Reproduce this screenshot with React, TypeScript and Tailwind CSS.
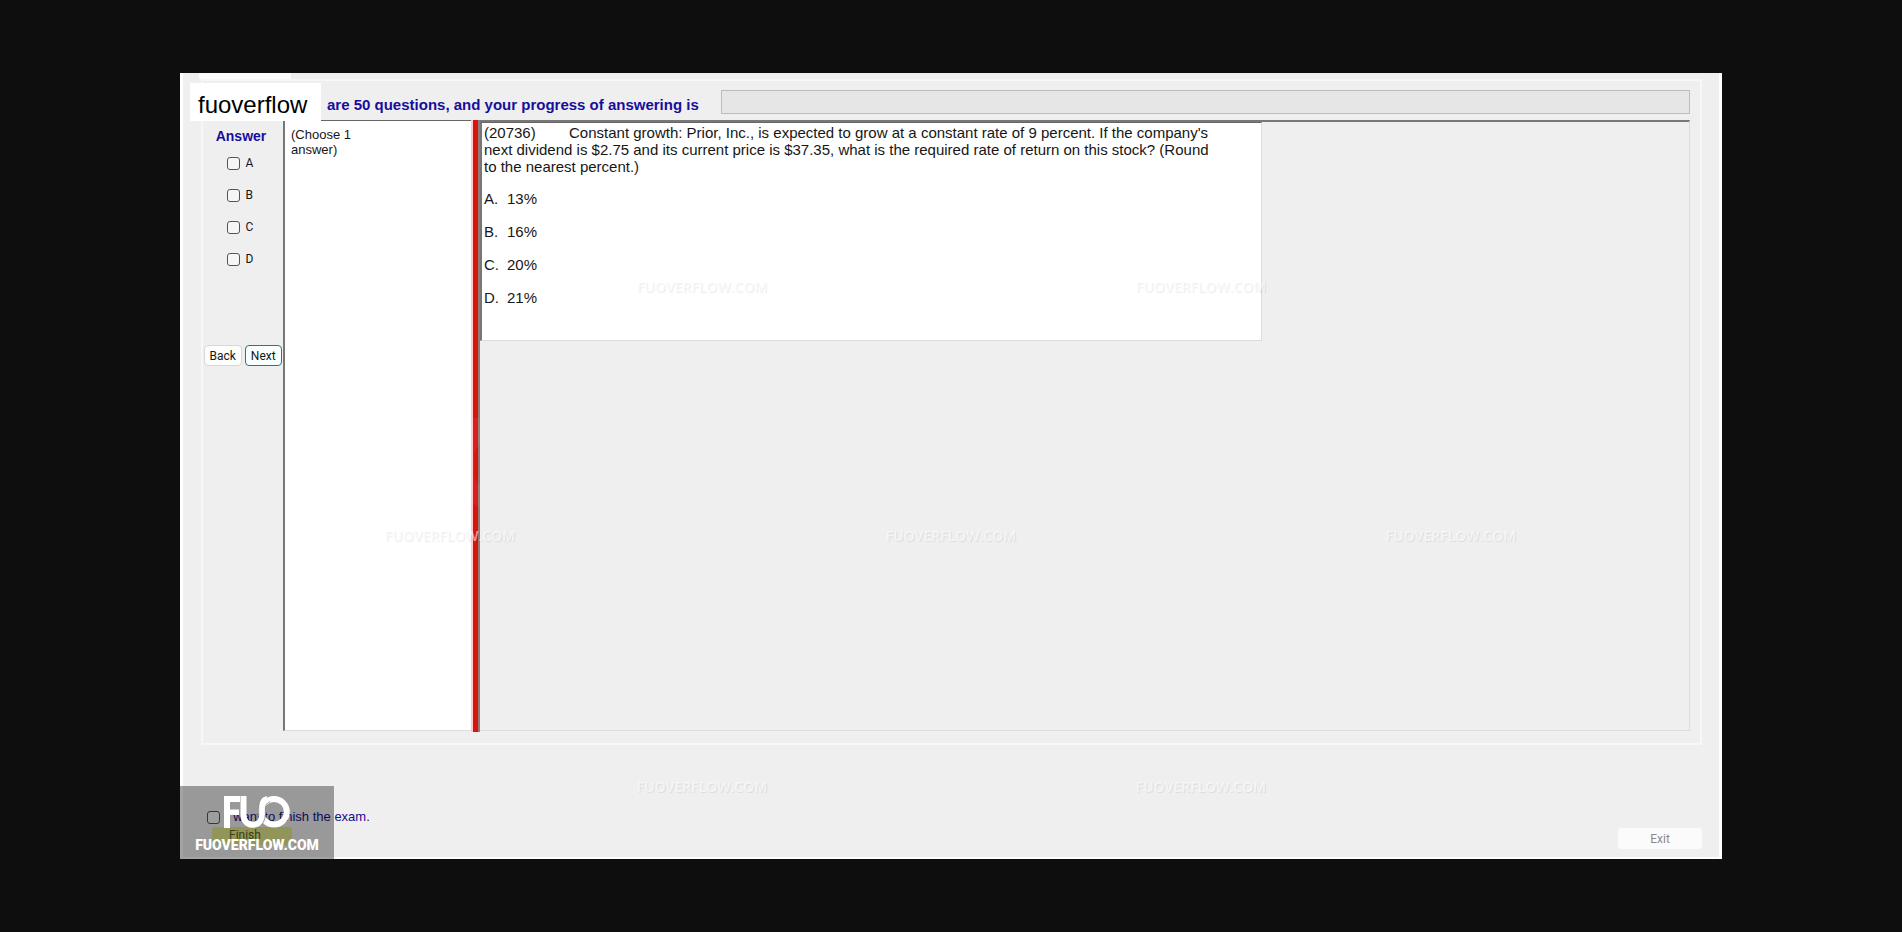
import React from "react";

const choices = ["A", "B", "C", "D"];

const answers = [
  { key: "A", text: "13%" },
  { key: "B", text: "16%" },
  { key: "C", text: "20%" },
  { key: "D", text: "21%" },
];

const watermarks = [
  { x: 519, y: 91 },
  { x: 1018, y: 91 },
  { x: 267, y: 340 },
  { x: 768, y: 340 },
  { x: 1268, y: 340 },
  { x: 519, y: 591 },
  { x: 1018, y: 591 },
];

function FuoLogo({ className, seam = false }: { className: string; seam?: boolean }) {
  return (
    <svg viewBox="0 0 66 32" className={className} fill="none" aria-hidden="true">
      <path d="M0 0H16V6H6V13.500H15V19H6V32H0Z" fill="currentColor" />
      <circle cx="50" cy="15.800" r="12.800" stroke="currentColor" strokeWidth="6" />
      <path
        d="M19.500 0V18.500C19.500 25 23.500 28.800 29 28.800S38 25 38 18.500V11C38 6.500 39.500 3.500 43 3"
        stroke="currentColor"
        strokeWidth="6"
      />
      {seam && (
        <g stroke="#8f8f8f" strokeWidth="0.900">
          <path d="M34.700 20V11C34.700 5.500 37 1.500 41 0" />
          <path d="M41.400 19V13C41.400 9 43 6.500 46 5.800" />
          <path d="M41.300 19C41 23.500 39.500 27 36.500 29.500" />
        </g>
      )}
    </svg>
  );
}

function Watermark({ x, y }: { x: number; y: number }) {
  return (
    <div className="absolute flex w-50 -translate-x-1/2 flex-col items-center" style={{ left: x, top: y }}>
      <FuoLogo className="h-[105px] w-50 text-white opacity-5" />
      <span className="mt-2 font-['Open_Sans',sans-serif] text-[14px] leading-5 font-semibold text-white/60 [text-shadow:1px_1px_1px_rgb(0_0_0/0.08)]">
        FUOVERFLOW.COM
      </span>
    </div>
  );
}

const box =
  "size-[13px] shrink-0 appearance-none rounded-[3px] border border-[#555] bg-[#f6f6f6] checked:bg-[#0a6a8a]";

export default function App() {
  return (
    <div className="flex min-h-screen flex-col bg-[#0e0e0e] px-[180px] py-[73px] font-['Liberation_Sans',Arial,sans-serif] text-[#161616]">
      <main className="relative flex flex-1 flex-col border-x-[3px] border-b-2 border-white bg-[#efefef]">
        <div className="absolute top-0 left-4 h-[6px] w-[92px] bg-[#fcfcfc]" />

        <section className="mt-[6px] mr-[17px] ml-[18px] flex flex-1 flex-col border-2 border-[#f7f7f7] pr-[10px] pb-3">
          <header className="flex h-[39px] items-start pl-[124px]">
            <h1 className="mt-[14px] shrink-0 text-[15px] leading-5 font-bold whitespace-nowrap text-[#180d9c]">
              are 50 questions, and your progress of answering is
            </h1>
            <div
              role="progressbar"
              aria-label="Answering progress"
              aria-valuenow={0}
              className="mt-[9px] ml-[22px] h-6 flex-1 border border-[#bcbcbc] bg-[#e6e6e6]"
            />
          </header>

          <div className="flex flex-1">
            <fieldset className="flex w-20 shrink-0 flex-col items-center">
              <legend className="w-full pt-[6px] pr-1 text-center text-[14px] leading-5 font-bold text-[#180d9c]">
                Answer
              </legend>
              <div className="flex flex-col pt-px pr-[2px]">
                {choices.map((c) => (
                  <label key={c} className="flex h-8 items-center gap-[6px] font-['Roboto',sans-serif] text-[12px]">
                    <input type="checkbox" className={box} />
                    <span className="w-3">{c}</span>
                  </label>
                ))}
              </div>
              <div className="mt-[70px] flex w-full gap-[3px] pr-px pl-px font-['Roboto',sans-serif] text-[12px]">
                <button type="button" className="h-[21px] flex-1 rounded-[4px] border border-[#d8d8d8] bg-[#fdfdfd]">
                  Back
                </button>
                <button type="button" className="h-[21px] flex-1 rounded-[4px] border border-[#39707c] bg-[#f8ffff]">
                  Next
                </button>
              </div>
            </fieldset>

            <div className="w-[188px] shrink-0 border-t border-b border-l-2 border-t-[#666] border-b-[#ddd] border-l-[#777] bg-white px-[6px] pt-[6px]">
              <p className="w-20 text-[13px] leading-[15px]">(Choose 1 answer)</p>
            </div>
            <div className="-mb-px w-[9px] shrink-0 border-r-2 border-l-2 border-r-[#927a78] border-l-[#ffc9c9] bg-[#d9130d]" />

            <div className="flex-1 border-t-2 border-r border-b border-t-[#787878] border-r-[#dcdcdc] border-b-[#dcdcdc]">
              <article className="h-[219px] w-[782px] border-t border-r border-b border-l-2 border-t-[#666] border-r-[#dcdcdc] border-b-[#dcdcdc] border-l-[#777] bg-white pt-px pl-[2px] text-[15px] leading-[17px]">
                <p className="w-[740px] whitespace-pre-wrap">
                  {"(20736)        Constant growth: Prior, Inc., is expected to grow at a constant rate of 9 percent. If the company's\nnext dividend is $2.75 and its current price is $37.35, what is the required rate of return on this stock? (Round\nto the nearest percent.)"}
                </p>
                <ol className="mt-[15px] flex flex-col gap-4">
                  {answers.map((a) => (
                    <li key={a.key} className="flex">
                      <span className="w-[23px]">{a.key}.</span>
                      <span>{a.text}</span>
                    </li>
                  ))}
                </ol>
              </article>
            </div>
          </div>
        </section>

        <footer className="flex h-28 items-start justify-between pr-[17px] pl-6">
          <div className="pt-[62px]">
            <label className="flex items-center gap-[6px] text-[13px] leading-5 text-[#180d8c]">
              <input type="checkbox" className={box} />
              I want to finish the exam.
            </label>
            <button
              type="button"
              className="ml-[5px] flex h-[18px] w-20 items-start rounded-[3px] bg-[#e3ea8c] pl-[17px] font-['Roboto',sans-serif] text-[12px] leading-4 text-[#5c6420]"
            >
              Finish
            </button>
          </div>
          <button
            type="button"
            className="mt-[83px] h-[21px] w-[84px] rounded-[3px] bg-[#fbfbfb] font-['Roboto',sans-serif] text-[12px] text-[#8a8a8a]"
          >
            Exit
          </button>
        </footer>

        <div className="pointer-events-none absolute inset-0">
          {watermarks.map((w) => (
            <Watermark key={`${w.x}-${w.y}`} x={w.x} y={w.y} />
          ))}
        </div>

        <div className="absolute top-[10px] left-[7px] flex h-[38px] w-[131px] items-center bg-white pt-[5px] pl-2 text-[24px] leading-6 text-black">
          fuoverflow
        </div>

        <div className="pointer-events-none absolute -bottom-[2px] -left-[3px] flex h-[73px] w-[154px] flex-col items-center bg-black/36 pt-[10px] text-white">
          <FuoLogo seam className="h-8 w-[66px]" />
          <span className="mt-[7px] font-['Roboto',sans-serif] text-[14px] leading-5 font-black">
            FUOVERFLOW.COM
          </span>
        </div>
      </main>
    </div>
  );
}
